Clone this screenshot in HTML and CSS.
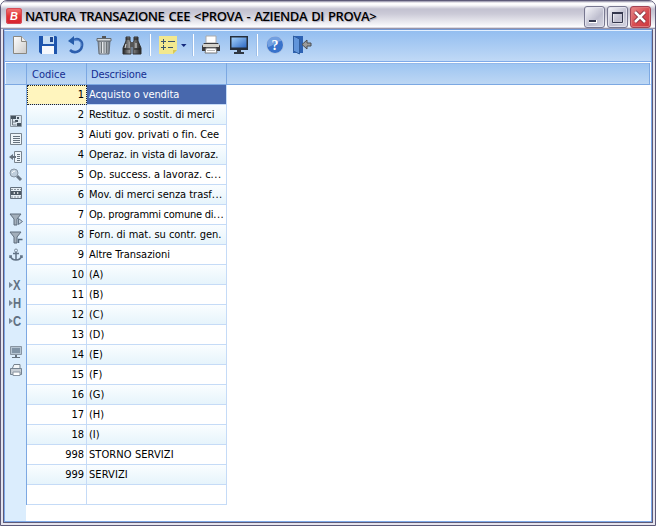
FILE: index.html
```
<!DOCTYPE html>
<html lang="it">
<head>
<meta charset="utf-8">
<title>Natura transazione CEE</title>
<link rel="stylesheet" href="styles.css">
</head>
<body>
<svg width="0" height="0" class="defs">
<defs>
<linearGradient id="gBlue" x1="0" y1="0" x2="1" y2="1"><stop offset="0" stop-color="#a4d2fb"/><stop offset="1" stop-color="#2e69c4"/></linearGradient>
<linearGradient id="gPage" x1="0" y1="0" x2="1" y2="1"><stop offset="0" stop-color="#fff"/><stop offset="1" stop-color="#cbcac9"/></linearGradient>
<linearGradient id="gGrey" x1="0" y1="0" x2="1" y2="0"><stop offset="0" stop-color="#777f88"/><stop offset=".4" stop-color="#eef1f3"/><stop offset="1" stop-color="#68717a"/></linearGradient>
<linearGradient id="gDark" x1="0" y1="0" x2="1" y2="0"><stop offset="0" stop-color="#222"/><stop offset=".4" stop-color="#a5a5a5"/><stop offset="1" stop-color="#222"/></linearGradient>
</defs>
</svg>
<div class="window">
<header class="titlebar">
<span class="logo">B</span>
<h1 class="title">NATURA TRANSAZIONE CEE &lt;PROVA - AZIENDA DI PROVA&gt;</h1>
<div class="controls">
<button class="ctl" aria-label="Riduci"><svg width="21" height="21"><path d="M5 13h8v3H5z" fill="#fff"/><path d="M5 13h7v2H5z" fill="#34374d"/></svg></button>
<button class="ctl" aria-label="Ingrandisci"><svg width="21" height="21"><path d="M6 6h10v10H6z" fill="none" stroke="#fff"/><path d="M5.500 5.500h10v10h-10z" fill="none" stroke="#34374d"/><path d="M5 6h11" stroke="#34374d" stroke-width="2"/></svg></button>
<button class="ctl close" aria-label="Chiudi"><svg width="21" height="21"><path d="M5 5l10 10M15 5L5 15" stroke="#702332" stroke-width="4"/><path d="M5 5l10 10M15 5L5 15" stroke="#fff" stroke-width="2.600"/></svg></button>
</div>
</header>
<div class="client">
<nav class="toolbar">
<svg class="tool t-new" width="20" height="20"><path d="M3.500 1.500h8l5 5v12h-13z" fill="url(#gPage)" stroke="#8a8780"/><path d="M11.500 1.500v5h5" fill="#eee" stroke="#8a8780"/></svg>
<svg class="tool t-save" width="20" height="20"><path d="M1 1h17l1 1v17H3l-2-2z" fill="#1e55ad"/><path d="M5 1h11v8H5z" fill="#c7def4"/><path d="M12 2h3v5h-3z" fill="#1e4690"/><path d="M4 11h12v8H4z" fill="#f6f8fc"/></svg>
<svg class="tool t-undo" width="20" height="20"><path d="M7 5.500C12 2 17 6 16 11c-1 6-8 8-12 4" fill="none" stroke="#2d5fae" stroke-width="2.500"/><path d="M8 5.500C12 4 16 7 15 11" fill="none" stroke="#6795d5"/><path d="M8 1v9L2 6z" fill="#265ca9"/></svg>
<svg class="tool t-bin" width="20" height="20"><path d="M8 2h4" stroke="#555" stroke-width="2"/><path d="M4 6h12l-1 13H5z" fill="url(#gGrey)" stroke="#68717a"/><path d="M3 3.500h14v2.500H3z" fill="#d4d8da" stroke="#626a72"/><path d="M7.500 7v11M10 7v11M12.500 7v11" stroke="#6d7478"/></svg>
<svg class="tool t-find" width="20" height="20"><path d="M4 2h4v4l1 2v11H1v-6l3-7zM12 2h4v4l3 7v6h-8V8l1-2z" fill="url(#gDark)" stroke="#303030"/><path d="M8 7h4v5H8z" fill="#555"/><path d="M4 4h4M12 4h4M2 14h6M12 14h6" stroke="#222"/><path d="M4 9l-1 4M14 8v5" stroke="#ddd"/></svg>
<i class="sep s1"></i>
<svg class="tool t-list" width="20" height="20"><path d="M1 1h18v14l-4 4H1z" fill="#f2e88e"/><path d="M15 19v-4h4z" fill="#d8c955"/><path d="M3 6.500h5M5.500 4v5M3 12.500h5M5.500 10v5M10 6.500h7M10 12.500h5" stroke="#39536b"/></svg>
<svg class="tool t-drop" width="6" height="4"><path d="M0 0h5.500L2.750 3z" fill="#14297d"/></svg>
<i class="sep s2"></i>
<svg class="tool t-print" width="20" height="20"><path d="M5 1h10v7H5z" fill="#fff" stroke="#aaa"/><path d="M3 8h14l2 3v5H1v-5z" fill="#3c3c3e"/><path d="M2 9h16v3H2z" fill="#d3d1ca"/><path d="M5 13h10l1 5H4z" fill="#fff" stroke="#777"/><path d="M6 15.500h8" stroke="#bbb"/></svg>
<svg class="tool t-screen" width="20" height="20"><path d="M1 1h18v14H1z" fill="#252e3a"/><path d="M2.500 2.500h15v10h-15z" fill="url(#gBlue)"/><path d="M8 15h4v2h3v2H5v-2h3z" fill="#303741"/></svg>
<i class="sep s3"></i>
<svg class="tool t-help" width="20" height="20"><circle cx="10" cy="10" r="8.500" fill="#3872cb" stroke="#b4c9e6"/><path d="M2 8a8 8 0 0 1 15-2C11 6 8 11 3 12z" fill="#729fe0"/><text x="10" y="15" text-anchor="middle" class="qmark">?</text></svg>
<svg class="tool t-exit" width="20" height="20"><path d="M1 1h10v17H1z" fill="#2d62b3"/><path d="M1.500 1l6 3v15l-6-3z" fill="#6195da" stroke="#305d9d"/><path d="M19 8h-4V5l-5 4.500 5 4.500v-3h4z" fill="#9b9b9b" stroke="#484c52"/></svg>
</nav>
<main class="browse">
<div class="colheads"><span class="corner"></span><span class="head code">Codice</span><span class="head desc">Descrisione</span><span class="head rest"></span></div>
<div class="content">
<aside class="sidebar">
<svg class="side i1" width="14" height="14"><path d="M1.500 1.500h11v11h-11z" fill="#dbe6ef" stroke="#8a96a2"/><path d="M2 2h5v3H2zM8 3h2v2H8zM6 6h3v2H6zM8 9h4v3H8z" fill="#46535f"/><path d="M3.500 5v6h4M4 8h3" fill="none" stroke="#737d87"/></svg>
<svg class="side i2" width="14" height="14"><path d="M1.500 1.500h11v11h-11z" fill="#eef5fa" stroke="#77838e"/><path d="M4 4.500h7M4 6.500h7M4 8.500h7M4 10.500h7" stroke="#65717d"/></svg>
<svg class="side i3" width="14" height="14"><path d="M5.500 1.500h7v11h-7z" fill="#eef5fa" stroke="#77838e"/><path d="M8 4.500h3M8 6.500h3M8 8.500h3M8 10.500h3" stroke="#65717d"/><path d="M0 7l4-3v2h3v2H4v2z" fill="#65717d"/></svg>
<svg class="side i4" width="14" height="14"><path d="M8 8l4 4" stroke="#687583" stroke-width="3"/><circle cx="5" cy="5" r="4" fill="#bfcedc" stroke="#8795a3"/><path d="M3 5q1-2 3-2" fill="none" stroke="#fff"/></svg>
<svg class="side i5" width="14" height="14"><path d="M1.500 1.500h11v11h-11z" fill="#e5eef5" stroke="#64717f"/><path d="M2 3.500h10M2 11h10" stroke="#8a949d" stroke-dasharray="2 1"/><path d="M2 5h10v4H2z" fill="#4d5964"/><path d="M4 7l2-1v2zM10 7L8 6v2z" fill="#fff"/></svg>
<svg class="side i6" width="14" height="14"><path d="M1 2h11L8 7v6H5V7z" fill="#a3afbb" stroke="#5e6d7d"/><path d="M9.500 6.500l4 3-4 3z" fill="#c5d1dd" stroke="#657688"/></svg>
<svg class="side i7" width="14" height="14"><path d="M1 2h11L8 7v6H5V7z" fill="#a3afbb" stroke="#5e6d7d"/><path d="M9.500 13V9.500h4" fill="none" stroke="#526579" stroke-width="1.500"/></svg>
<svg class="side i8" width="14" height="14"><circle cx="7" cy="2.500" r="1.500" fill="none" stroke="#7b8b9b"/><path d="M7 4v8M4 5.500h6M1.500 8q1 4 5.500 4t5.500-4M1 10V8h2M13 10V8h-2" fill="none" stroke="#627386" stroke-width="1.500"/></svg>
<div class="side key i9"><i></i><b>X</b></div>
<div class="side key i10"><i></i><b>H</b></div>
<div class="side key i11"><i></i><b>C</b></div>
<svg class="side i12" width="14" height="14"><path d="M1.500 1.500h11v8h-11z" fill="#b6c5d3" stroke="#8895a2"/><path d="M3 3h8v5H3z" fill="#8194a6"/><path d="M6 10h2v2h3v1H3v-1h3z" fill="#65717d"/></svg>
<svg class="side i13" width="14" height="14"><path d="M3.500 5L5 1.500h6V6" fill="#f4f7f9" stroke="#77838e"/><path d="M1.500 5.500h11v6h-11z" fill="#c7ced5" stroke="#758391"/><path d="M4 9h7v3.500H4z" fill="#fff" stroke="#8793a0"/></svg>
</aside>
<table class="records">
<tbody>
<tr class="selected"><td>1</td><td class="snug">Acquisto o vendita</td></tr>
<tr><td>2</td><td class="snug">Restituz. o sostit. di merci</td></tr>
<tr><td>3</td><td>Aiuti gov. privati o fin. Cee</td></tr>
<tr><td>4</td><td class="snug">Operaz. in vista di lavoraz.</td></tr>
<tr><td>5</td><td>Op. success. a lavoraz. c<span class="dots">...</span></td></tr>
<tr><td>6</td><td>Mov. di merci senza trasf<span class="dots">...</span></td></tr>
<tr><td>7</td><td class="tight">Op. programmi comune di<span class="dots">...</span></td></tr>
<tr><td>8</td><td>Forn. di mat. su contr. gen.</td></tr>
<tr><td>9</td><td>Altre Transazioni</td></tr>
<tr><td>10</td><td>(A)</td></tr>
<tr><td>11</td><td>(B)</td></tr>
<tr><td>12</td><td>(C)</td></tr>
<tr><td>13</td><td>(D)</td></tr>
<tr><td>14</td><td>(E)</td></tr>
<tr><td>15</td><td>(F)</td></tr>
<tr><td>16</td><td>(G)</td></tr>
<tr><td>17</td><td>(H)</td></tr>
<tr><td>18</td><td>(I)</td></tr>
<tr><td>998</td><td class="caps">STORNO SERVIZI</td></tr>
<tr><td>999</td><td class="caps">SERVIZI</td></tr>
<tr class="blank"><td></td><td></td></tr>
</tbody>
</table>
</div>
</main>
</div>
</div>
</body>
</html>
```
FILE: styles.css
```
* { box-sizing: border-box; }
body { margin: 0; background: #fff; font-family: "DejaVu Sans Condensed", "DejaVu Sans", sans-serif; font-stretch: condensed; font-size: 11px; color: #000; }
svg { display: block; flex: none; }
.defs { position: absolute; }
.window { width: 656px; height: 526px; border: 1px solid #5d5a78; border-radius: 7px 7px 0 0; background: #e5e4ee; padding: 0 2px 2px; display: flex; flex-direction: column; overflow: hidden; }
.titlebar { height: 28px; flex: none; margin: 0 -2px; padding: 5px 4px 0 5px; display: flex; align-items: flex-start; background: linear-gradient(#8d8aa3 0, #fff 2px, #fafafc 4px, #c2c1d0 8px, #cccbd8 13px, #f5f5f8 24px, #fff 26px, #b7b5c7 27px, #77748d 28px); }
.logo { width: 16px; height: 16px; margin-top: 2px; border-radius: 3px; background: linear-gradient(#f27b7b, #e23434 50%, #d52131); color: #fff; font: italic bold 11px/16px "Liberation Sans", sans-serif; text-align: center; box-shadow: inset 0 0 0 1px #d64b55; }
.title { margin: 1px 0 0 3px; font: 600 13px/19px "Open Sans", sans-serif; font-stretch: normal; white-space: nowrap; letter-spacing: -.38px; word-spacing: 1px; text-shadow: 1px 1px 1px #aaa8b9; }
.controls { display: flex; gap: 2px; margin-left: auto; }
.ctl { width: 21px; height: 22px; padding: 0; border: 1px solid #77778f; border-radius: 3px; background: linear-gradient(135deg, #f7f7fb, #bdbdce 60%, #d8d8e4); box-shadow: inset 0 0 0 1px #e2e2ed; }
.ctl svg { margin: -1px; }
.close { border-color: #a14355; background: linear-gradient(135deg, #e6898a, #d74b50 55%, #cc3840); box-shadow: inset 0 0 0 1px #df7779; }
.client { flex: 1; min-height: 0; border: 1px solid #5d5a78; border-top: 1px solid #7299d7; display: flex; flex-direction: column; background: #fff; }
.toolbar { height: 31px; flex: none; border-top: 1px solid #e3f0ff; border-left: 1px solid #7ea9e8; border-right: 1px solid #7ea9e8; display: flex; align-items: flex-start; padding: 4px 0 0 5px; background: linear-gradient(#93bef0, #c0d9f6); }
.tool { margin-right: 8px; }
.t-find { margin-right: 7px; }
.t-list { margin-right: 3px; }
.t-drop { margin: 9px 5px 0 0; }
.t-screen { margin-right: 7px; }
.t-print { margin-right: 8px; }
.t-help { margin-right: 7px; }
.sep { width: 2px; height: 22px; margin: -1px 8px 0 0; background: #fff; border-left: 1px solid #9dbfe9; }
.s1 { margin-right: 7px; }
.s2 { margin-right: 7px; }
.s3 { margin-right: 7px; }
.qmark { font: bold 14px "Liberation Serif", serif; fill: #fff; }
.browse { flex: 1; min-height: 0; border: 1px solid #7ea9e8; display: flex; flex-direction: column; }
.colheads { display: flex; flex: none; height: 23px; border-top: 1px solid #fff; box-shadow: inset 0 1px #92b8ea; border-right: 1px solid #fff; border-bottom: 1px solid #7ca8e2; background: linear-gradient(#9cc4f1, #bdd7f4); color: #142d91; line-height: 23px; }
.corner { width: 22px; border-left: 1px solid #e4f1ff; border-right: 1px solid #7ca8e2; }
.head { padding-left: 4px; border-right: 1px solid #7ca8e2; }
.code { width: 60px; padding-left: 5px; }
.desc { width: 140px; letter-spacing: -.15px; }
.rest { flex: 1; }
.content { display: flex; flex: 1; min-height: 0; }
.sidebar { width: 21px; flex: none; padding: 29px 0 0 4px; background: #dbedfd; }
.side { margin-bottom: 4px; }
.i5 { margin-bottom: 12px; }
.i8 { margin-bottom: 16px; }
.key { height: 14px; width: 14px; display: flex; align-items: center; color: #607184; font: bold 15px/14px "Liberation Sans", sans-serif; }
.key i { flex: none; border: 3px solid transparent; border-left: 4px solid #768799; border-right: 0; }
.key b { display: block; transform: scaleX(.75); transform-origin: left; }
.i11 { margin-bottom: 17px; }
.records { border-collapse: separate; border-spacing: 0; table-layout: fixed; width: 201px; height: max-content; border-left: 1px solid #7ca8e2; }
.records td { height: 20px; padding: 0 2px; border-right: 1px solid #c5dbf7; border-bottom: 1px solid #c5dbf7; line-height: 18px; white-space: nowrap; letter-spacing: -.03px; }
.records td:first-child { width: 60px; text-align: right; }
.records td:last-child { width: 140px; }
.records .snug { letter-spacing: -.1px; }
.records .tight { letter-spacing: -.25px; }
.records .caps { letter-spacing: .08px; }
.dots { letter-spacing: .5px; }
.records tr:nth-child(even) { background: linear-gradient(#fafdff, #e5f3fb); }
.records .selected td:last-child { background: #4868ad; color: #fff; }
.records .selected td:first-child { background: #fff5be; outline: 1px dotted #222; outline-offset: -1px; }
```
